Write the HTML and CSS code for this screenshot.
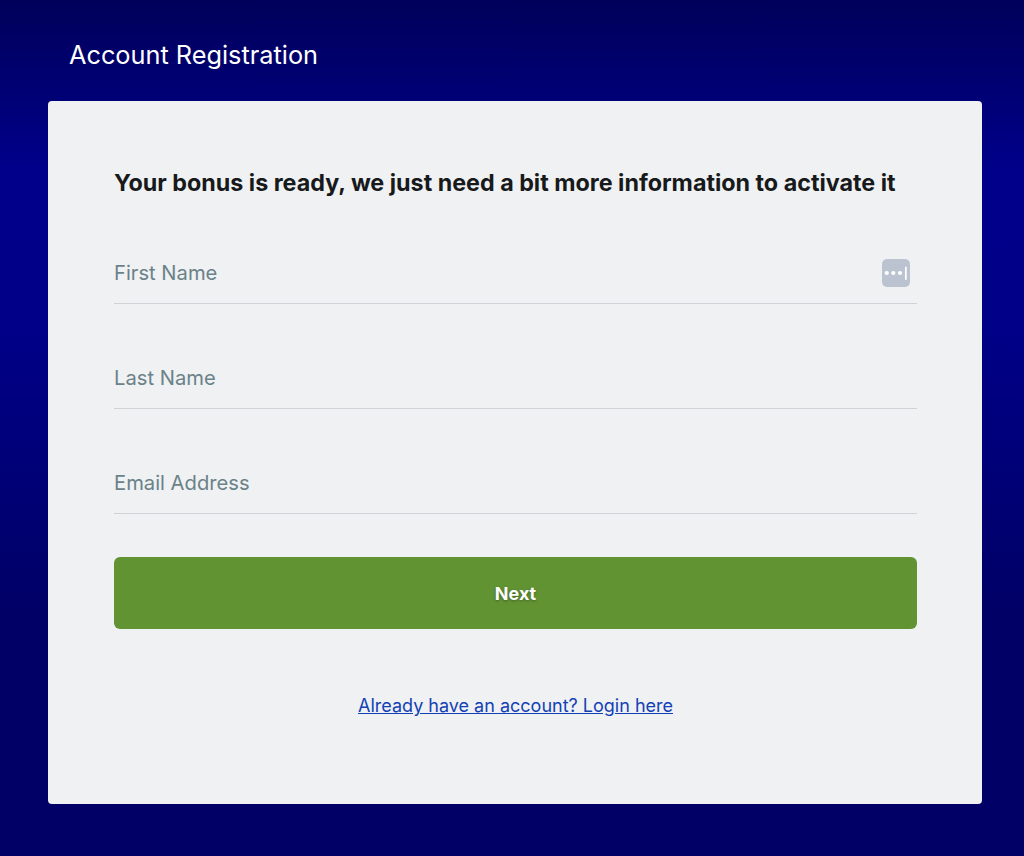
FILE: index.html
```html
<!DOCTYPE html>
<html lang="en">
<head>
    <meta charset="UTF-8">
    <meta name="viewport" content="width=device-width, initial-scale=1.0">
    <title>Account Registration</title>
    <link rel="stylesheet" href="styles.css">
</head>
<body>
    <header class="page-header">
        <h1>Account Registration</h1>
    </header>
    <section class="card">
        <h2>Your bonus is ready, we just need a bit more information to activate it</h2>
        <form class="signup-form">
            <div class="field">
                <input type="text" placeholder="First Name">
                <svg class="key-icon" width="28" height="28" viewBox="0 0 28 28" aria-hidden="true">
                    <rect width="28" height="28" rx="5" fill="#bcc3d0"/>
                    <circle cx="4.7" cy="14" r="2.1" fill="#fff"/>
                    <circle cx="11.3" cy="14" r="2.1" fill="#fff"/>
                    <circle cx="18" cy="14" r="2.1" fill="#fff"/>
                    <rect x="23" y="7.8" width="1.7" height="13" fill="#fff"/>
                </svg>
            </div>
            <div class="field">
                <input type="text" placeholder="Last Name">
            </div>
            <div class="field">
                <input type="email" placeholder="Email Address">
            </div>
            <button type="button">Next</button>
        </form>
        <a class="login-link" href="#">Already have an account? Login here</a>
    </section>
</body>
</html>
```

FILE: styles.css
```css
html {
    height: 100%;
}
body {
    margin: 0;
    padding: 0 42px 0 48px;
    height: 856px;
    box-sizing: border-box;
    overflow: hidden;
    font-family: Inter, "Liberation Sans", sans-serif;
    background: linear-gradient(to bottom, #00005a 0%, #00008b 20%, #000088 38%, #000066 72%, #000066 100%);
}
.page-header {
    padding: 38px 0 0 21px;
    height: 101px;
    box-sizing: border-box;
}
.page-header h1 {
    margin: 0;
    font-size: 25.3px;
    line-height: 33px;
    font-weight: 400;
    color: #fff;
}
.card {
    height: 703px;
    box-sizing: border-box;
    padding: 67px 65px 0 66px;
    background-color: #eff1f3;
    border-radius: 4px;
}
.card h2 {
    margin: 0;
    font-size: 23.3px;
    line-height: 30px;
    font-weight: 700;
    color: #17191b;
}
.signup-form {
    display: flex;
    flex-direction: column;
    padding-top: 44px;
}
.field {
    display: flex;
    align-items: center;
    height: 61px;
    margin-bottom: 43px;
    border-bottom: 1px solid #d0d3d6;
}
.field input {
    flex: 1;
    padding: 0;
    border: none;
    outline: none;
    background: transparent;
    font-family: inherit;
    font-size: 20.2px;
}
.field input::placeholder {
    color: #6b8288;
    opacity: 1;
}
.key-icon {
    margin-right: 7px;
}
.signup-form button {
    height: 72px;
    border: none;
    border-radius: 6px;
    background-color: #629333;
    color: #fff;
    font-family: inherit;
    font-size: 18px;
    font-weight: 700;
    text-shadow: 0 1px 3px rgba(0, 0, 0, 0.35);
    cursor: pointer;
}
.login-link {
    display: block;
    margin-top: 65px;
    text-align: center;
    font-size: 18px;
    line-height: 24px;
    color: #1341b5;
}
```
